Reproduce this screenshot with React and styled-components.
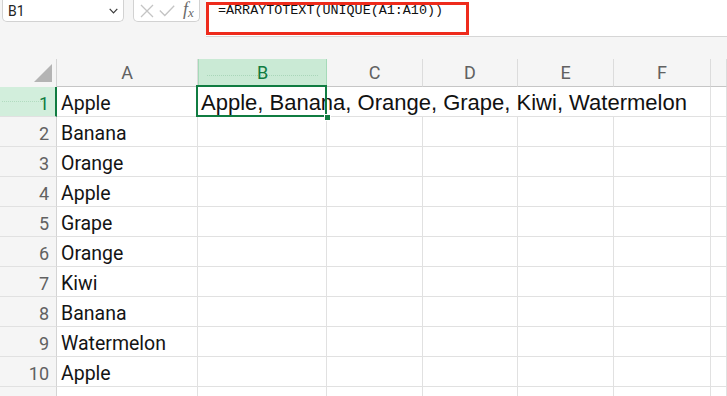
import React from "react";
import styled, { createGlobalStyle } from "styled-components";

const GlobalStyle = createGlobalStyle`
  html, body { margin: 0; padding: 0; background: #f5f5f5; overflow: hidden; }
  body { font-family: Roboto, "Noto Sans", sans-serif; }
`;

const Page = styled.div`
  width: 727px;
  height: 396px;
  overflow: hidden;
  display: flex;
  flex-direction: column;
  background: #f5f5f5;
`;

const TopBar = styled.div`
  display: flex;
  align-items: flex-start;
  height: 37px;
  flex: none;
`;

const NameBox = styled.div`
  margin-left: 2px;
  width: 122px;
  height: 22px;
  box-sizing: border-box;
  background: #fff;
  border: 1px solid #d2d2d2;
  border-top: none;
  border-radius: 0 0 5px 5px;
  display: flex;
  align-items: center;
  justify-content: space-between;
  padding: 0 5px 0 5px;
  font-family: Roboto, sans-serif;
  font-size: 14px;
  color: #242424;
`;

const IconBox = styled.div`
  margin-left: 9px;
  width: 67px;
  height: 22px;
  box-sizing: border-box;
  background: #fff;
  border: 1px solid #d2d2d2;
  border-top: none;
  border-radius: 0 0 5px 5px;
  display: flex;
  align-items: center;
  padding-left: 6px;
  gap: 5px;
`;

const FxMark = styled.span`
  margin-left: 3px;
  font-family: "Liberation Serif", serif;
  font-style: italic;
  color: #6a6a6a;
  font-size: 18px;
  line-height: 18px;
  display: flex;
  align-items: flex-start;
  margin-top: -2px;
  & > sub {
    font-size: 13px;
    line-height: 13px;
    margin-left: 0px;
    margin-top: 6px;
    vertical-align: baseline;
  }
`;

const FormulaArea = styled.div`
  margin-left: 6px;
  flex: 1;
  height: 37px;
  box-sizing: border-box;
  background: #fff;
  border-bottom: 1px solid #d6d6d6;
  position: relative;
  padding: 3px 0 0 12px;
  font-family: "Liberation Mono", "DejaVu Sans Mono", monospace;
  font-size: 13.4px;
  line-height: 16px;
  color: #111;
`;

const Highlight = styled.div`
  position: absolute;
  left: 0;
  top: 2px;
  width: 263px;
  height: 33px;
  box-sizing: border-box;
  border: 3px solid #ee2b1c;
  pointer-events: none;
`;

const Spacer = styled.div`
  height: 22px;
  flex: none;
`;

const Grid = styled.div`
  display: grid;
  grid-template-columns: 57px 141px 129px 96px 95px 96px 97px 1fr;
  grid-template-rows: 28px repeat(11, 30px);
  flex: none;
`;

const Corner = styled.div`
  box-sizing: border-box;
  border-right: 1px solid #d4d4d4;
  display: flex;
  align-items: flex-end;
  justify-content: flex-end;
  padding: 0 4px 5px 0;
`;

const ColHead = styled.div`
  box-sizing: border-box;
  border-right: 1px solid ${(p) => (p.$active ? "#a6dab9" : "#dcdcdc")};
  border-left: ${(p) => (p.$active ? "1px solid #a6dab9" : "none")};
  border-bottom: 1px solid #c6c6c6;
  background: ${(p) => (p.$active ? "#caead5" : "transparent")};
  color: ${(p) => (p.$active ? "#107c41" : "#616161")};
  font-size: 18px;
  display: flex;
  align-items: center;
  justify-content: center;
  position: relative;
  ${(p) =>
    p.$active &&
    `&::before {
      content: "";
      position: absolute;
      left: 8px;
      right: 8px;
      top: 16px;
      border-top: 1px dotted #a9d6b9;
    }`}
  & > span { position: relative; }
`;

const RowHead = styled.div`
  box-sizing: border-box;
  border-right: ${(p) => (p.$active ? "2px solid #107c41" : "1px solid #d4d4d4")};
  border-bottom: 1px solid #e1e1e1;
  background: ${(p) => (p.$active ? "#d2eedc" : "transparent")};
  color: ${(p) => (p.$active ? "#107c41" : "#616161")};
  font-size: 18px;
  display: flex;
  align-items: center;
  justify-content: flex-end;
  padding-top: 3px;
  padding-right: ${(p) => (p.$active ? "6px" : "7px")};
  position: relative;
  ${(p) =>
    p.$active &&
    `&::before {
      content: "";
      position: absolute;
      left: 2px;
      right: 12px;
      top: 14px;
      border-top: 1px dotted #b2dcc0;
    }`}
  & > span { position: relative; }
`;

const Cell = styled.div`
  box-sizing: border-box;
  background: #fff;
  border-right: 1px solid #e1e1e1;
  border-bottom: 1px solid #e1e1e1;
  font-size: 19.5px;
  color: #141414;
  display: flex;
  align-items: center;
  padding-left: 4px;
  padding-top: 3px;
  white-space: nowrap;
`;

const SpanCell = styled(Cell)`
  grid-column: ${(p) => p.$span};
  position: relative;
  overflow: visible;
  padding-left: 3px;
  padding-top: 3px;
  font-family: "Liberation Sans", Arial, sans-serif;
  font-size: 22px;
  color: #111;
`;

const Selection = styled.div`
  position: absolute;
  left: -2px;
  top: -2px;
  width: 131px;
  height: 32px;
  box-sizing: border-box;
  border: 2px solid #107c41;
  pointer-events: none;
`;

const FillHandle = styled.div`
  position: absolute;
  left: 126px;
  top: 27px;
  width: 7px;
  height: 7px;
  box-sizing: border-box;
  background: #107c41;
  border: 1px solid #fff;
`;

const columns = ["A", "B", "C", "D", "E", "F", ""];
const fruits = [
  "Apple",
  "Banana",
  "Orange",
  "Apple",
  "Grape",
  "Orange",
  "Kiwi",
  "Banana",
  "Watermelon",
  "Apple",
  "",
];

export default function App() {
  return (
    <>
      <GlobalStyle />
      <Page>
        <TopBar>
          <NameBox>
            <span>B1</span>
            <svg width="9" height="6" viewBox="0 0 9 6">
              <polyline points="0.7,0.8 4.5,4.8 8.3,0.8" fill="none" stroke="#3a3a3a" strokeWidth="1.2" />
            </svg>
          </NameBox>
          <IconBox>
            <svg width="14" height="14" viewBox="0 0 14 14">
              <path d="M1 1 L13 13 M13 1 L1 13" stroke="#c4c4c4" strokeWidth="1.3" fill="none" />
            </svg>
            <svg width="16" height="12" viewBox="0 0 16 12">
              <polyline points="0.8,5.5 5.8,10.5 15.2,0.8" stroke="#c4c4c4" strokeWidth="1.3" fill="none" />
            </svg>
            <FxMark>
              f<sub>x</sub>
            </FxMark>
          </IconBox>
          <FormulaArea>
            <Highlight />
            =ARRAYTOTEXT(UNIQUE(A1:A10))
          </FormulaArea>
        </TopBar>
        <Spacer />
        <Grid>
          <Corner>
            <svg width="18" height="18" viewBox="0 0 18 18">
              <polygon points="18,0 18,18 0,18" fill="#b4b4b4" />
            </svg>
          </Corner>
          {columns.map((c, i) => (
            <ColHead key={i} $active={c === "B"}>
              <span>{c}</span>
            </ColHead>
          ))}
          {fruits.map((f, r) => (
            <React.Fragment key={r}>
              <RowHead $active={r === 0}>
                <span>{r + 1}</span>
              </RowHead>
              <Cell>{f}</Cell>
              {r === 0 ? (
                <>
                  <SpanCell $span="3 / 8">
                    Apple, Banana, Orange, Grape, Kiwi, Watermelon
                    <Selection />
                    <FillHandle />
                  </SpanCell>
                  <Cell />
                </>
              ) : (
                columns.slice(1).map((c, i) => <Cell key={i} />)
              )}
            </React.Fragment>
          ))}
        </Grid>
      </Page>
    </>
  );
}
